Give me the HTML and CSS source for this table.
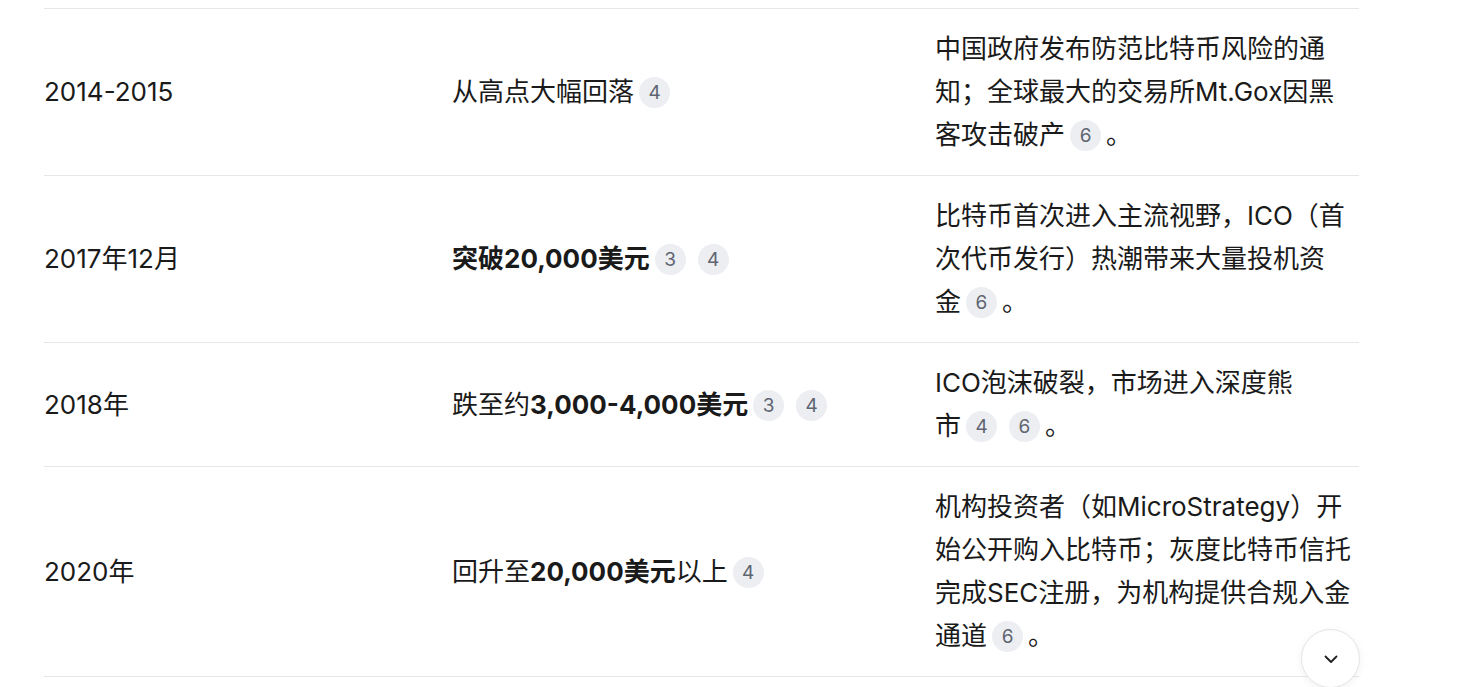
FILE: index.html
```html
<!DOCTYPE html>
<html lang="zh-CN">
<head>
<meta charset="utf-8">
<title>比特币历史</title>
<link rel="stylesheet" href="styles.css">
</head>
<body>
<div class="page">
  <table class="history">
    <colgroup>
      <col class="c-year">
      <col class="c-price">
      <col class="c-event">
    </colgroup>
    <tbody>
      <tr>
        <td>2014-2015</td>
        <td><span class="nw">从高点大幅回落<span class="cite">4</span></span></td>
        <td>中国政府发布防范比特币风险的通知；全球最大的交易所Mt.Gox因黑客攻击破<span class="nw">产<span class="cite">6</span>。</span></td>
      </tr>
      <tr>
        <td>2017年12月</td>
        <td><span class="nw"><strong>突破20,000美元</strong><span class="cite">3</span><span class="cite">4</span></span></td>
        <td>比特币首次进入主流视野，ICO（首次代币发行）热潮带来大量投机资<span class="nw">金<span class="cite">6</span>。</span></td>
      </tr>
      <tr>
        <td>2018年</td>
        <td><span class="nw">跌至约<strong>3,000-4,000美元</strong><span class="cite">3</span><span class="cite">4</span></span></td>
        <td>ICO泡沫破裂，市场进入深度熊<span class="nw">市<span class="cite">4</span><span class="cite">6</span>。</span></td>
      </tr>
      <tr>
        <td>2020年</td>
        <td><span class="nw">回升至<strong>20,000美元</strong>以上<span class="cite">4</span></span></td>
        <td>机构投资者（如MicroStrategy）开始公开购入比特币；灰度比特币信托完成SEC注册，为机构提供合规入金通<span class="nw">道<span class="cite">6</span>。</span></td>
      </tr>
    </tbody>
  </table>
  <button class="scroll-down" type="button" aria-label="向下滚动">
    <svg width="20" height="20" viewBox="0 0 20 20" fill="none"><path d="M4.5 7.5 L10 13 L15.5 7.5" stroke="#1f1f1f" stroke-width="1.8" stroke-linecap="round" stroke-linejoin="round"/></svg>
  </button>
</div>
</body>
</html>
```
FILE: styles.css
```css
html, body {
  margin: 0;
  padding: 0;
  background: #ffffff;
}
body {
  font-family: "Inter", "Noto Sans CJK SC", sans-serif;
  color: #1a1a1a;
  font-size: 26px;
  overflow: hidden;
}
.page {
  position: relative;
  width: 1459px;
  height: 687px;
  padding: 8px 0 0 44px;
  box-sizing: border-box;
}
.history {
  border-collapse: collapse;
  table-layout: fixed;
  width: 1315px;
}
.c-year { width: 408px; }
.c-price { width: 483px; }
.c-event { width: 424px; }
.history tr {
  border-top: 1px solid #e6e7ea;
  border-bottom: 1px solid #e6e7ea;
}
.history td {
  padding: 18px 0 19px;
  line-height: 43px;
  vertical-align: middle;
  text-align: left;
}
.history strong {
  font-weight: 700;
}
.nw {
  white-space: nowrap;
}
.cite {
  display: inline-block;
  width: 31px;
  height: 31px;
  line-height: 31px;
  border-radius: 50%;
  background: #eceef2;
  color: #5f6470;
  font-family: "Inter", sans-serif;
  font-size: 19px;
  text-align: center;
  vertical-align: 2px;
  margin: 0 5px 0 5px;
}
.cite + .cite {
  margin-left: 7px;
}
.scroll-down {
  position: absolute;
  left: 1301px;
  top: 629px;
  width: 59px;
  height: 59px;
  border-radius: 50%;
  border: 1px solid #e3e4e7;
  background: #ffffff;
  box-shadow: 0 2px 8px rgba(0, 0, 0, 0.06);
  display: flex;
  align-items: center;
  justify-content: center;
  padding: 0;
  cursor: pointer;
}
```
